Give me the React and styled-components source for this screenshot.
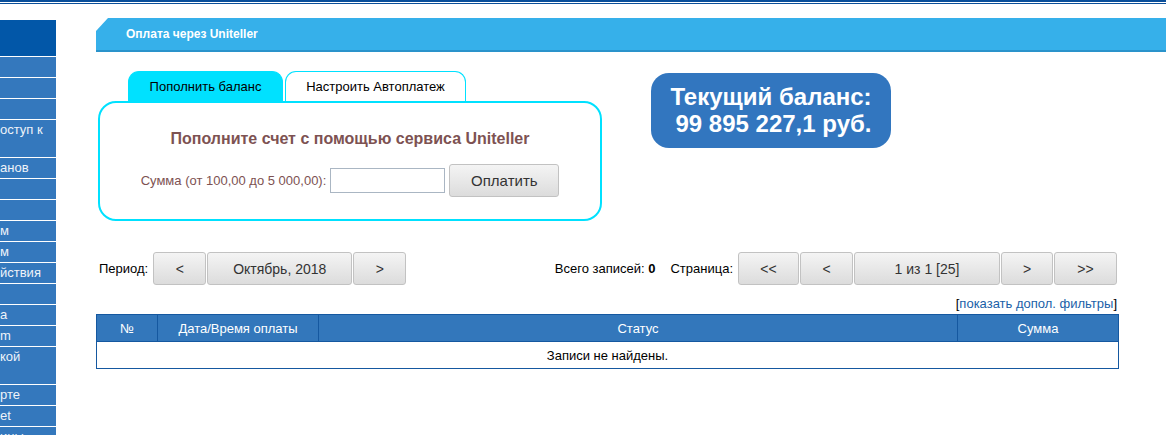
import React from "react";
import styled, { createGlobalStyle } from "styled-components";

const GlobalStyle = createGlobalStyle`
    body {
        margin: 0;
        background: #ffffff;
        font-family: "Liberation Sans", Arial, sans-serif;
        font-size: 13px;
        color: #000;
        overflow: hidden;
    }
`;

const TopLines = styled.div`
    height: 1px;
    border-top: 2px solid #0b4f9a;
    border-bottom: 1px solid #0b4f9a;
`;

const Page = styled.div`
    display: flex;
    flex-direction: row;
    align-items: flex-start;
`;

const Sidebar = styled.div`
    width: 56px;
    flex-shrink: 0;
    margin-top: 16px;
    overflow: hidden;
`;

const SideTop = styled.div`
    height: 36px;
    background: #0257a8;
    border-bottom: 1px solid #ffffff;
`;

const SideItem = styled.div`
    height: ${(p) => (p.$tall ? "36px" : "20px")};
    line-height: ${(p) => (p.$tall ? "18px" : "20px")};
    padding-top: ${(p) => (p.$tall ? "1px" : "0")};
    background: #3478bd;
    border-bottom: 1px solid #ffffff;
    color: #eef3f9;
    font-size: 13px;
    white-space: nowrap;
`;

const Main = styled.div`
    flex: 1;
    margin-left: 40px;
    padding-top: 14px;
    padding-right: 47px;
    min-width: 0;
`;

const TitleBar = styled.div`
    height: 32px;
    margin-right: -47px;
    background: #36b0ea;
    border-bottom: 2px solid #2a93cb;
    clip-path: polygon(12px 0, 100% 0, 100% 100%, 0 100%, 0 13px);
    display: flex;
    align-items: center;
    padding-left: 30px;
    color: #ffffff;
    font-weight: bold;
    font-size: 12px;
`;

const TopSection = styled.div`
    display: flex;
    flex-direction: row;
    align-items: flex-start;
    margin-top: 19px;
`;

const PayBlock = styled.div`
    width: 504px;
    margin-left: 2px;
`;

const Tabs = styled.div`
    display: flex;
    flex-direction: row;
    gap: 2px;
    padding-left: 30px;
`;

const Tab = styled.div`
    height: 30px;
    box-sizing: border-box;
    display: flex;
    align-items: center;
    justify-content: center;
    border-radius: 11px 11px 0 0;
    font-size: 13px;
    background: ${(p) => (p.$active ? "#00e1ff" : "#ffffff")};
    border: 1px solid #00e1ff;
    border-bottom: none;
    width: ${(p) => p.$w}px;
`;

const Panel = styled.div`
    border: 2px solid #00e1ff;
    border-radius: 18px;
    padding: 25px 0 22px;
    display: flex;
    flex-direction: column;
    align-items: center;
`;

const PanelTitle = styled.div`
    font-size: 16px;
    font-weight: bold;
    color: #7d5252;
    line-height: 22px;
`;

const FormRow = styled.div`
    margin-top: 14px;
    display: flex;
    flex-direction: row;
    align-items: center;
    gap: 4px;
`;

const Label = styled.span`
    color: #7d5252;
    font-size: 13px;
`;

const AmountInput = styled.input`
    width: 115px;
    height: 25px;
    box-sizing: border-box;
    border: 1px solid #aab6c3;
    margin: 0;
    padding: 2px 4px;
    font-family: inherit;
`;

const Button = styled.button`
    height: 33px;
    width: ${(p) => p.$w}px;
    box-sizing: border-box;
    border: 1px solid #c2c2c2;
    border-radius: 3px;
    background: linear-gradient(#f4f4f4, #dcdcdc);
    color: #333333;
    font-family: "Liberation Sans", Arial, sans-serif;
    font-size: ${(p) => (p.$big ? "15px" : "14px")};
    padding: 0;
    cursor: pointer;
`;

const Balance = styled.div`
    margin-left: 49px;
    margin-top: 2px;
    width: 240px;
    height: 75px;
    box-sizing: border-box;
    background: #3276bf;
    border-radius: 18px;
    color: #ffffff;
    font-weight: bold;
    font-size: 24px;
    line-height: 27px;
    display: flex;
    flex-direction: column;
    align-items: center;
    justify-content: center;
    padding-bottom: 2px;
`;

const BalanceAmount = styled.div`
    padding-left: 5px;
`;

const NavRow = styled.div`
    margin-top: 31px;
    display: flex;
    flex-direction: row;
    justify-content: space-between;
    align-items: center;
    padding-left: 3px;
    padding-right: 2px;
`;

const Group = styled.div`
    display: flex;
    flex-direction: row;
    align-items: center;
    gap: 1px;
`;

const NavLabel = styled.span`
    margin-right: ${(p) => p.$mr || 5}px;
    font-size: 13px;
`;

const FilterLine = styled.div`
    margin-top: 11px;
    text-align: right;
    padding-right: 2px;
    font-size: 13px;
    line-height: 16px;
`;

const FilterLink = styled.a`
    color: #1a5fa8;
    text-decoration: none;
`;

const Table = styled.table`
    margin-top: 2px;
    width: 100%;
    border-collapse: collapse;
    border: 1px solid #1558a0;
    font-size: 13px;
`;

const Th = styled.th`
    background: #3377bb;
    color: #ffffff;
    font-weight: normal;
    height: 26px;
    padding: 0;
    border: 1px solid #1558a0;
    width: ${(p) => p.$w}px;
`;

const Td = styled.td`
    height: 26px;
    padding: 0;
    text-align: center;
    border: 1px solid #1558a0;
`;

const sideItems = [
    { t: "" },
    { t: "" },
    { t: "" },
    { t: "оступ к", tall: true },
    { t: "анов" },
    { t: "" },
    { t: "" },
    { t: "м" },
    { t: "м" },
    { t: "йствия" },
    { t: "" },
    { t: "а" },
    { t: "m" },
    { t: "кой", tall: true },
    { t: "рте" },
    { t: "et" },
    { t: "ины" },
];

export default function App() {
    return (
        <>
            <GlobalStyle />
            <TopLines />
            <Page>
                <Sidebar>
                    <SideTop />
                    {sideItems.map((it, i) => (
                        <SideItem key={i} $tall={it.tall}>
                            {it.t}
                        </SideItem>
                    ))}
                </Sidebar>
                <Main>
                    <TitleBar>Оплата через Uniteller</TitleBar>
                    <TopSection>
                        <PayBlock>
                            <Tabs>
                                <Tab $active $w={155}>Пополнить баланс</Tab>
                                <Tab $w={181}>Настроить Автоплатеж</Tab>
                            </Tabs>
                            <Panel>
                                <PanelTitle>Пополните счет с помощью сервиса Uniteller</PanelTitle>
                                <FormRow>
                                    <Label>Сумма (от 100,00 до 5 000,00):</Label>
                                    <AmountInput type="text" />
                                    <Button $w={110} $big>Оплатить</Button>
                                </FormRow>
                            </Panel>
                        </PayBlock>
                        <Balance>
                            <div>Текущий баланс:</div>
                            <BalanceAmount>99 895 227,1 руб.</BalanceAmount>
                        </Balance>
                    </TopSection>
                    <NavRow>
                        <Group>
                            <NavLabel $mr={4}>Период:</NavLabel>
                            <Button $w={53}>&lt;</Button>
                            <Button $w={145}>Октябрь, 2018</Button>
                            <Button $w={53}>&gt;</Button>
                        </Group>
                        <Group>
                            <NavLabel $mr={14}>
                                Всего записей: <b>0</b>
                            </NavLabel>
                            <NavLabel $mr={4}>Страница:</NavLabel>
                            <Button $w={61}>&lt;&lt;</Button>
                            <Button $w={53}>&lt;</Button>
                            <Button $w={146}>1 из 1 [25]</Button>
                            <Button $w={52}>&gt;</Button>
                            <Button $w={63}>&gt;&gt;</Button>
                        </Group>
                    </NavRow>
                    <FilterLine>
                        [<FilterLink href="#">показать допол. фильтры</FilterLink>]
                    </FilterLine>
                    <Table>
                        <thead>
                            <tr>
                                <Th $w={60}>№</Th>
                                <Th $w={160}>Дата/Время оплаты</Th>
                                <Th>Статус</Th>
                                <Th $w={160}>Сумма</Th>
                            </tr>
                        </thead>
                        <tbody>
                            <tr>
                                <Td colSpan={4}>Записи не найдены.</Td>
                            </tr>
                        </tbody>
                    </Table>
                </Main>
            </Page>
        </>
    );
}
